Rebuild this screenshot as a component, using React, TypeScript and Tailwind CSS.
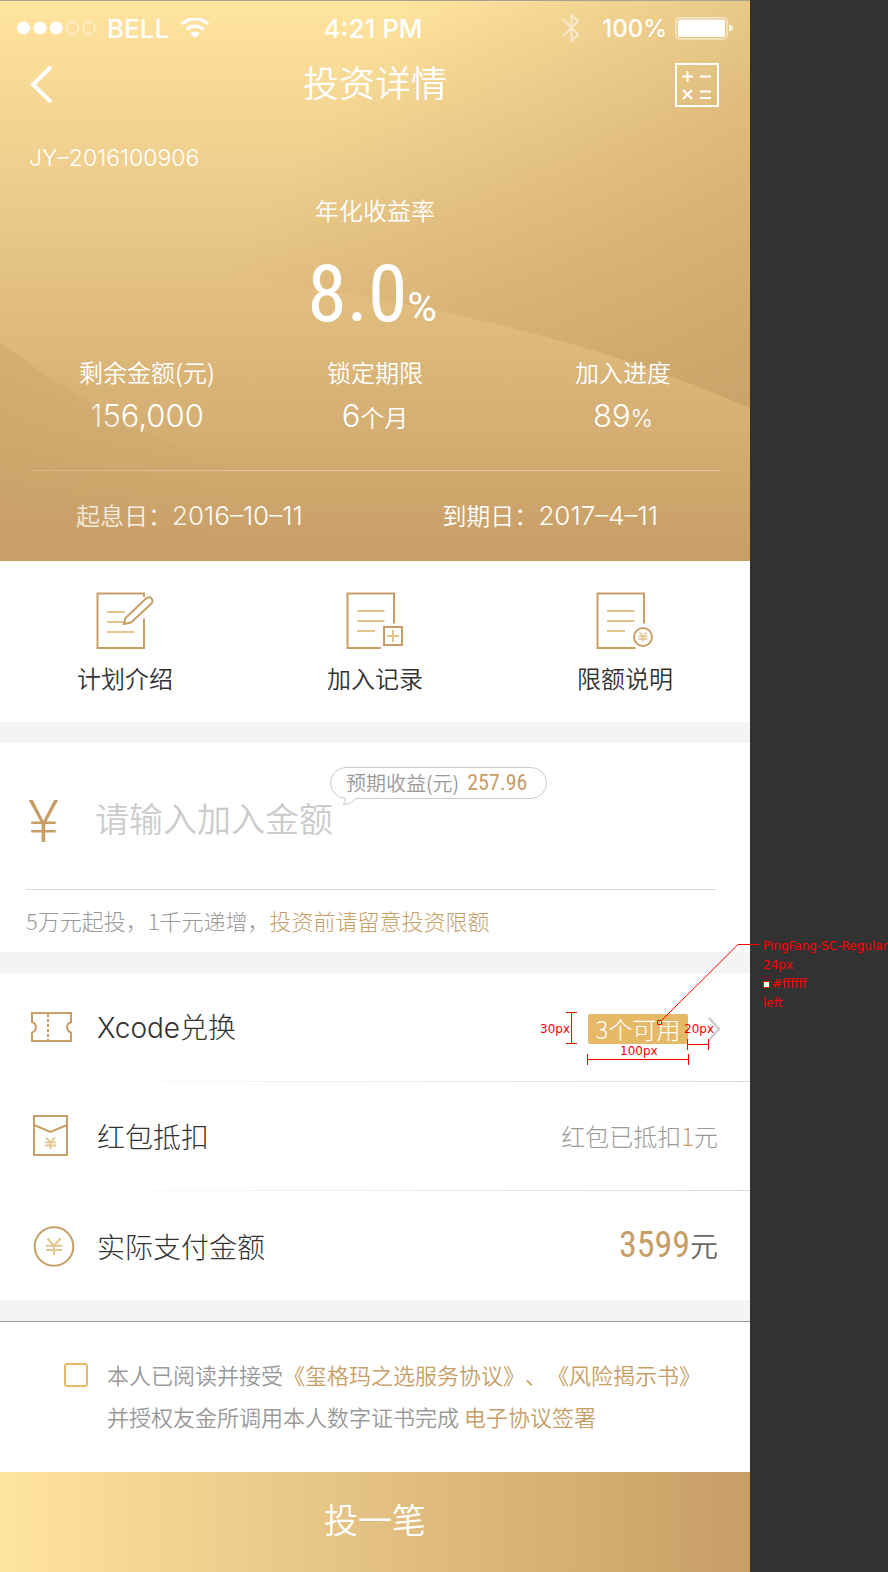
import { useState } from "react";
import type { ReactNode } from "react";

const GOLD = "#c79e66";
const PALE = "#e3c58d";

function Yuan({ x, y, s, width }: { x: number; y: number; s: number; width: number }) {
  return (
    <path
      d={`M${x - s * 0.8} ${y - s}L${x} ${y - s * 0.1}L${x + s * 0.8} ${y - s}M${x - s} ${y - s * 0.1}H${x + s}M${x - s} ${y + s * 0.45}H${x + s}M${x} ${y - s * 0.1}V${y + s * 1.1}`}
      fill="none"
      stroke={PALE}
      strokeWidth={width}
    />
  );
}

function PlanIcon() {
  return (
    <svg className="h-[58px] w-[58px]" viewBox="0 0 58 58" fill="none" aria-hidden="true">
      <path d="M48 5V1.5H1.5V56H48V26.5" stroke={GOLD} strokeWidth="2" />
      <path d="M11 20H29M11 30H28M11 40H38.500" stroke={PALE} strokeWidth="2" />
      <path d="M28 32L29.500 26L50 6.500A3.600 3.600 0 0 1 55.500 11.500L35 30.500Z" stroke={GOLD} strokeWidth="2" />
    </svg>
  );
}

function RecordIcon() {
  return (
    <svg className="h-[58px] w-[58px]" viewBox="0 0 58 58" fill="none" aria-hidden="true">
      <path d="M48 31.500V1.500H1.500V56H35" stroke={GOLD} strokeWidth="2" />
      <path d="M11 19H38.500M11 29H38.500M11 39H29" stroke={PALE} strokeWidth="2" />
      <rect x="38" y="35" width="18" height="18" stroke={GOLD} strokeWidth="2" />
      <path d="M41 44H53M47 38V50" stroke={PALE} strokeWidth="2" />
    </svg>
  );
}

function LimitIcon() {
  return (
    <svg className="h-[58px] w-[58px]" viewBox="0 0 58 58" fill="none" aria-hidden="true">
      <path d="M48 31.500V1.500H1.500V56H39.500" stroke={GOLD} strokeWidth="2" />
      <path d="M11 19H38.500M11 29H38.500M11 39H29" stroke={PALE} strokeWidth="2" />
      <circle cx="47" cy="45" r="9" stroke={GOLD} strokeWidth="2" />
      <Yuan x={47} y={45} s={4.5} width={1.4} />
    </svg>
  );
}

function TicketIcon() {
  return (
    <svg className="h-[30px] w-[42px]" viewBox="0 0 42 30" fill="none" aria-hidden="true">
      <path d="M1 1H40V10A5.500 5.500 0 0 0 40 20.500V29H1V20.500A5.500 5.500 0 0 0 1 10Z" stroke={GOLD} strokeWidth="2" />
      <path d="M17 2V29" stroke={GOLD} strokeWidth="2" strokeDasharray="3 2" />
    </svg>
  );
}

function EnvelopeIcon() {
  return (
    <svg className="h-[42px] w-[38px]" viewBox="0 0 38 42" fill="none" aria-hidden="true">
      <path d="M1 1H34V40H1ZM1 10L17.500 17L34 10" stroke={GOLD} strokeWidth="2" />
      <Yuan x={17.5} y={28} s={5.5} width={1.8} />
    </svg>
  );
}

function CoinIcon() {
  return (
    <svg className="h-[44px] w-[46px] shrink-0" viewBox="0 0 46 44" fill="none" aria-hidden="true">
      <circle cx="25" cy="22.500" r="19.300" stroke={GOLD} strokeWidth="2" />
      <Yuan x={25} y={22.5} s={8} width={2} />
    </svg>
  );
}

function StatusBar() {
  return (
    <div className="flex h-14 items-center justify-between pr-[17px] pl-[17px] font-['Inter','Noto_Sans_CJK_SC',sans-serif] text-[26px] leading-8 font-medium text-white">
      <div className="flex w-[290px] items-center">
        <svg className="h-4 w-20" viewBox="0 0 80 16" aria-hidden="true">
          <g fill="#fff">
            <circle cx="6.500" cy="7" r="6.500" />
            <circle cx="23" cy="7" r="6.500" />
            <circle cx="39.300" cy="7" r="6.500" />
          </g>
          <g fill="none" stroke="#fff" strokeOpacity=".8">
            <circle cx="55.500" cy="7" r="6" />
            <circle cx="72" cy="7" r="6" />
          </g>
        </svg>
        <span className="ml-2.5">BELL</span>
        <svg className="ml-3 h-[22px] w-7" viewBox="0 0 28 22" fill="none" stroke="#fff" aria-hidden="true">
          <path d="M1 6A19 19 0 0 1 27 6" strokeWidth="3.400" />
          <path d="M5.500 11.500A12.500 12.500 0 0 1 22.500 11.500" strokeWidth="3.200" />
          <path d="M14 20L9 15.500A7.500 7.500 0 0 1 19 15.500Z" fill="#fff" stroke="none" />
        </svg>
      </div>
      <time className="pr-1">4:21 PM</time>
      <div className="flex w-[290px] items-center justify-end">
        <svg className="mr-[22px] h-8 w-[18px]" viewBox="0 0 18 32" fill="none" stroke="#fff" strokeOpacity=".5" strokeWidth="2" aria-hidden="true">
          <path d="M1 6L16 21.500L9.500 28V2L16 8L1 23.500" />
        </svg>
        <span className="text-2xl">100%</span>
        <svg className="ml-2 h-6 w-[58px]" viewBox="0 0 58 24" aria-hidden="true">
          <rect x="1" y="0.500" width="51" height="21.500" rx="4" fill="none" stroke="#fff" strokeOpacity=".6" strokeWidth="1.500" />
          <rect x="3" y="2.500" width="47" height="17.500" rx="2" fill="#fff" />
          <path d="M54 7.500Q58 8.500 58 11T54 15Z" fill="#fff" fillOpacity=".8" />
        </svg>
      </div>
    </div>
  );
}

function Stat({ label, className, children }: { label: string; className?: string; children: ReactNode }) {
  return (
    <div className={className}>
      <dt className="text-2xl leading-8">{label}</dt>
      <dd className="mt-2 font-['Inter','Noto_Sans_CJK_SC',sans-serif] text-[31px] leading-10 font-light">{children}</dd>
    </div>
  );
}

function Hero() {
  return (
    <header className="relative border-t border-[#a9a090] bg-linear-to-b from-[#ffe49e] to-[#c79e66] text-white">
      <svg className="absolute inset-0 h-full w-full" viewBox="0 0 750 560" preserveAspectRatio="none" aria-hidden="true">
        <defs>
          <linearGradient id="sweep" gradientUnits="userSpaceOnUse" x1="340" y1="100" x2="760" y2="400">
            <stop offset="0" stopColor={GOLD} stopOpacity="0" />
            <stop offset="1" stopColor={GOLD} stopOpacity=".74" />
          </linearGradient>
        </defs>
        <path d="M0 0H750V407C550 320 300 270 0 262Z" fill="url(#sweep)" />
      </svg>
      <div className="relative">
        <StatusBar />
        <div className="flex h-[55px] items-center justify-between pr-[30px] pl-[30px]">
          <button type="button" aria-label="返回" className="w-[46px]">
            <svg className="h-10 w-[22px]" viewBox="0 0 22 40" fill="none" stroke="#fff" strokeWidth="4" aria-hidden="true">
              <path d="M21 2L3 19.500L21 37" />
            </svg>
          </button>
          <h1 className="pb-2 text-4xl leading-10 font-[350]">投资详情</h1>
          <button type="button" aria-label="计算器" className="w-[46px]">
            <svg className="h-[46px] w-[46px]" viewBox="0 0 46 46" fill="none" stroke="#fff" strokeWidth="2" aria-hidden="true">
              <rect x="2" y="2" width="42" height="42" />
              <path d="M8 14.500H19M13.500 9V20M26 14.500H37M9 28L18 37M18 28L9 37M26 29.500H37M26 36H37" />
            </svg>
          </button>
        </div>
        <p className="pt-8 pl-[29px] font-['Inter','Noto_Sans_CJK_SC',sans-serif] text-[23px] leading-7 font-light">JY–2016100906</p>
        <p className="mt-[22px] text-center text-2xl leading-8">年化收益率</p>
        <p className="mt-7 pr-1.5 text-center font-['Roboto_Condensed','Liberation_Sans_Narrow','Roboto',sans-serif] text-[80px] leading-20 font-normal">
          8.0<span className="font-['Roboto',sans-serif] text-[40px] leading-none">%</span>
        </p>
        <dl className="mt-[22px] grid grid-cols-3 text-center">
          <Stat label="剩余金额(元)" className="pl-11">156,000</Stat>
          <Stat label="锁定期限">
            6<span className="text-2xl leading-none font-[350]">个月</span>
          </Stat>
          <Stat label="加入进度" className="pr-1">
            89<span className="text-2xl leading-none">%</span>
          </Stat>
        </dl>
        <hr className="mx-[30px] mt-[34px] border-t border-white/30" />
        <div className="flex justify-between pt-7 pr-[92px] pb-[30px] pl-[76px] text-2xl leading-8">
          <p>
            起息日：<span className="font-['Inter',sans-serif] text-[26px] leading-none font-light">2016–10–11</span>
          </p>
          <p>
            到期日：<span className="font-['Inter',sans-serif] text-[26px] leading-none font-light">2017–4–11</span>
          </p>
        </div>
      </div>
      <svg className="pointer-events-none absolute inset-0 h-full w-full" viewBox="0 0 750 560" preserveAspectRatio="none" aria-hidden="true">
        <defs>
          <linearGradient id="wave" gradientUnits="userSpaceOnUse" x1="0" y1="400" x2="260" y2="440">
            <stop offset="0" stopColor={GOLD} stopOpacity=".4" />
            <stop offset="1" stopColor={GOLD} stopOpacity="0" />
          </linearGradient>
        </defs>
        <path d="M0 341C70 395 150 440 280 485V560H0Z" fill="url(#wave)" />
      </svg>
    </header>
  );
}

function Shortcut({ icon, label }: { icon: ReactNode; label: string }) {
  return (
    <a href="#" className="flex flex-col items-center pt-[31px] pb-7">
      {icon}
      <span className="mt-3 text-2xl leading-8 text-[#333]">{label}</span>
    </a>
  );
}

function Row({ icon, label, last, children }: { icon: ReactNode; label: ReactNode; last?: boolean; children: ReactNode }) {
  return (
    <li>
      <div className={last ? "flex min-h-[109px] items-center pr-8 pl-[31px]" : "flex min-h-[108px] items-center pr-8 pl-[31px]"}>
        <span className="flex w-[42px] justify-center">{icon}</span>
        <span className="ml-6 flex-1 text-[28px] leading-10 font-light text-[#333]">{label}</span>
        {children}
      </div>
      {!last && <div className="ml-[30px] h-px bg-linear-to-r from-white to-[#dcdcdc]" />}
    </li>
  );
}

function Annotations() {
  return (
    <div className="pointer-events-none absolute inset-0 text-left font-['DejaVu_Sans',sans-serif] text-xs leading-[19px] font-normal whitespace-nowrap text-[#f00]">
      <svg className="absolute -top-[85px] -left-[60px] h-[150px] w-60" viewBox="0 0 240 150" fill="none" stroke="#f00" aria-hidden="true">
        <path d="M43.500 83.500V114.500M38 83.500H49M38 114.500H49" />
        <path d="M59.500 130.500H160.500M59.500 125V136M160.500 125V136" />
        <path d="M159.500 115.500H180.500M159.500 110V121M180.500 110V121" />
        <path d="M129.500 91.500H133.500V95.500H129.500ZM134 91L210 15.500H231" />
      </svg>
      <span className="absolute top-1.5 -left-12">30px</span>
      <span className="absolute top-7 left-8">100px</span>
      <span className="absolute top-1.5 left-24">20px</span>
      <div className="absolute -top-[77px] left-[175px]">
        <p>PingFang-SC-Regular</p>
        <p>24px</p>
        <p className="flex items-center gap-0.5">
          <span className="h-[7px] w-[7px] border border-[#f00] bg-white" />
          #ffffff
        </p>
        <p>left</p>
      </div>
    </div>
  );
}

export default function App() {
  const [amount, setAmount] = useState("");
  const [agreed, setAgreed] = useState(false);

  return (
    <div className="flex min-h-screen overflow-x-hidden bg-[#323232] font-['Noto_Sans_CJK_SC',sans-serif] font-[350] [text-spacing-trim:space-all]">
      <main className="relative z-10 min-w-0 flex-1 bg-[#f4f4f4]">
        <Hero />
        <nav className="grid grid-cols-3 bg-white">
          <Shortcut icon={<PlanIcon />} label="计划介绍" />
          <Shortcut icon={<RecordIcon />} label="加入记录" />
          <Shortcut icon={<LimitIcon />} label="限额说明" />
        </nav>

        <section className="mt-[21px] bg-white">
          <div className="relative mr-[34px] ml-[26px] flex items-center border-b border-[#dcdcdc] pt-12 pb-10">
            <label htmlFor="amount" className="w-[69px] pt-1 pl-0.5 font-['Roboto',sans-serif] text-[60px] leading-[54px] font-light text-[#c79e66]">
              ¥
            </label>
            <input
              id="amount"
              inputMode="decimal"
              value={amount}
              onChange={(e) => setAmount(e.target.value)}
              placeholder="请输入加入金额"
              className="min-w-0 flex-1 pb-1 text-[34px] leading-[50px] text-[#333] outline-none placeholder:text-[#ccc]"
            />
            <p className="absolute top-6 left-[304px] flex h-8 items-center rounded-full border border-[#ccc] bg-white pr-[19px] pl-[15px] text-xl leading-7 text-[#999]">
              预期收益(元)
              <b className="ml-2 font-['Roboto_Condensed','Liberation_Sans_Narrow','Roboto',sans-serif] text-[22px] font-normal text-[#c79e66]">257.96</b>
              <svg className="absolute top-[29px] left-[10px] h-[9px] w-[18px]" viewBox="0 0 18 9" aria-hidden="true">
                <path d="M4.500 0Q5 4 2 8Q10 7 16.500 0" fill="#fff" />
                <path d="M4.500 1Q5 4 2 8Q10 7 16.500 1" fill="none" stroke="#ccc" />
              </svg>
            </p>
          </div>
          <p className="px-[26px] pt-3.5 pb-4 text-[22px] leading-8 font-light text-[#999]">
            5万元起投，1千元递增，
            <a href="#" className="text-[#c79e66]">
              投资前请留意投资限额
            </a>
          </p>
        </section>

        <ul className="mt-[21px] bg-white">
          <Row
            icon={<TicketIcon />}
            label={
              <>
                <span className="font-['Inter',sans-serif] text-[28px]">Xcode</span>兑换
              </>
            }
          >
            <div className="relative mt-1 h-[30px] w-[100px] rounded-[2px] bg-[#e6b966] text-center text-2xl leading-[30px] font-light text-white">
              3个可用
              <Annotations />
            </div>
            <svg className="mt-1 -mr-[3px] ml-5 h-6 w-[13px]" viewBox="0 0 13 24" fill="none" stroke="#ccc" strokeWidth="2.500" aria-hidden="true">
              <path d="M1 1L11 12L1 23" />
            </svg>
          </Row>
          <Row icon={<EnvelopeIcon />} label="红包抵扣">
            <span className="text-2xl leading-8 font-light text-[#999]">
              红包已抵扣<span className="text-[#c79e66]">1</span>元
            </span>
          </Row>
          <Row icon={<CoinIcon />} label="实际支付金额" last>
            <span className="pb-0.5 text-[28px] leading-10 text-[#666]">
              <span className="font-['Roboto_Condensed','Liberation_Sans_Narrow','Roboto',sans-serif] text-4xl font-normal text-[#c79e66]">3599</span>元
            </span>
          </Row>
        </ul>

        <section className="mt-[21px] border-t border-[#999] bg-white">
          <div className="flex items-start pt-[31px] pb-[35px] pl-16 text-[22px] leading-[42px] text-[#999]">
            <input
              id="agree"
              type="checkbox"
              checked={agreed}
              onChange={(e) => setAgreed(e.target.checked)}
              className="mt-2.5 h-6 w-6 shrink-0 appearance-none rounded-[3px] border-2 border-[#e6b966] checked:bg-[#e6b966]"
            />
            <div className="ml-[19px]">
              <label htmlFor="agree">本人已阅读并接受</label>
              <a href="#" className="text-[#c79e66]">《玺格玛之选服务协议》</a>
              <span className="text-[#c79e66]">、</span>
              <a href="#" className="text-[#c79e66]">《风险揭示书》</a>
              <br />
              并授权友金所调用本人数字证书完成{" "}
              <a href="#" className="text-[#c79e66]">电子协议签署</a>
            </div>
          </div>
          <button type="button" className="h-[100px] w-full bg-linear-to-r from-[#ffe49e] to-[#c79e66] pb-2 text-[34px] text-white">
            投一笔
          </button>
        </section>
      </main>
      <aside className="w-[138px] shrink-0" />
    </div>
  );
}
